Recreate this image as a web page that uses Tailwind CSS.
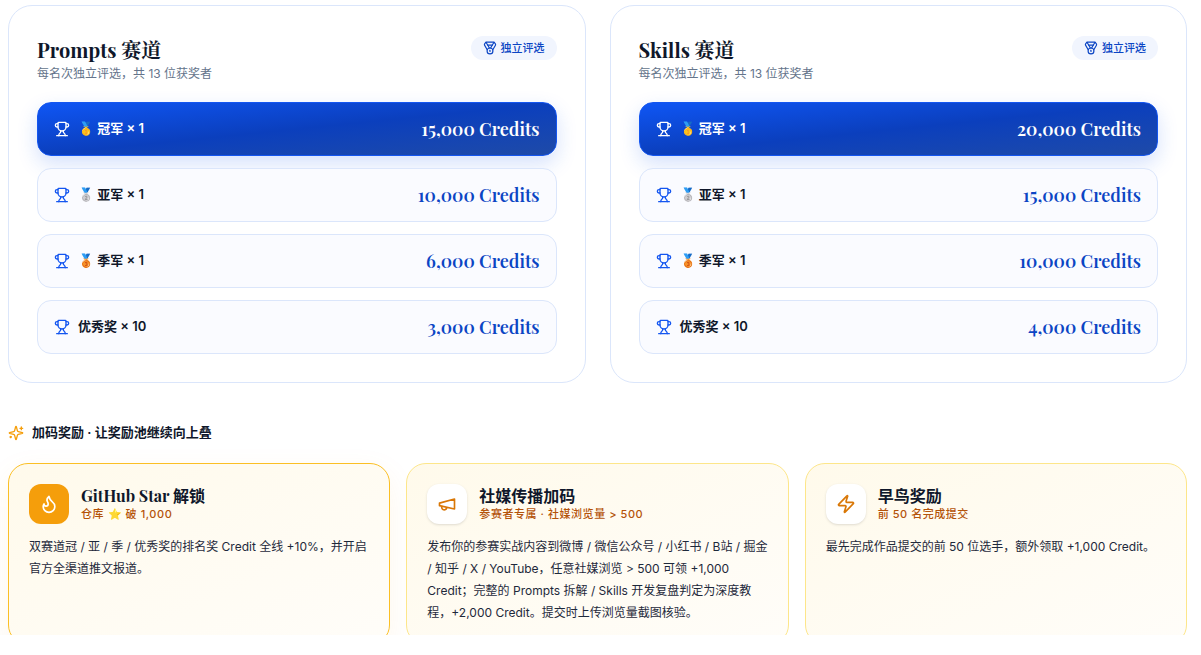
<!DOCTYPE html>
<html lang="zh">
<head>
  <meta charset="UTF-8">
  <title>奖励</title>
  <script src="https://cdn.jsdelivr.net/npm/@tailwindcss/browser@4"></script>
</head>
<body class="bg-white font-['Inter','Noto_Sans_CJK_SC',sans-serif] text-[#0f172a] overflow-hidden">
  <div class="w-[1179px] ml-2 pt-[5px]">
    <!-- Tracks -->
    <div class="grid grid-cols-2 gap-6">
      <!-- Prompts -->
      <section class="rounded-3xl border border-[#dbe6fb] bg-white p-7">
        <div class="flex justify-between items-start">
          <div>
            <h2 class="font-['Playfair_Display','Liberation_Serif','Noto_Serif_CJK_SC','Noto_Sans_CJK_SC',serif] font-bold text-xl leading-7 mt-[2px]">Prompts 赛道</h2>
            <p class="text-xs leading-4 text-[#64748b] mt-[2px]">每名次独立评选，共 13 位获奖者</p>
          </div>
          <span class="flex items-center gap-1 h-6 px-3 rounded-full bg-[#f1f5fe] text-[#0b45c4] text-[11px] font-medium mt-[2px]">
            <svg class="w-[14px] h-[14px]" viewBox="0 0 24 24" fill="none" stroke="currentColor" stroke-width="2" stroke-linecap="round" stroke-linejoin="round"><path d="M7.21 15 2.66 7.14a2 2 0 0 1 .13-2.2L4.4 2.8A2 2 0 0 1 6 2h12a2 2 0 0 1 1.6.8l1.6 2.14a2 2 0 0 1 .14 2.2L16.79 15"/><path d="M11 12 5.12 2.2"/><path d="m13 12 5.88-9.8"/><path d="M8 7h8"/><circle cx="12" cy="17" r="5"/><path d="M12 18v-2h-.5"/></svg>
            独立评选
          </span>
        </div>
        <div class="flex flex-col gap-3 mt-5">
          <div class="h-[54px] flex items-center justify-between px-4 rounded-[14px] border border-[#1456f0] bg-gradient-to-br from-[#0f56f5] via-[#0b3fbd] to-[#1e4aa8] text-white shadow-[0_8px_20px_rgba(20,86,240,0.18)]">
            <div class="flex items-center gap-2 text-[13px] font-semibold">
              <svg class="w-4 h-4" viewBox="0 0 24 24" fill="none" stroke="currentColor" stroke-width="2" stroke-linecap="round" stroke-linejoin="round"><path d="M10 14.66v1.626a2 2 0 0 1-.976 1.696A5 5 0 0 0 7 21.978"/><path d="M14 14.66v1.626a2 2 0 0 0 .976 1.696A5 5 0 0 1 17 21.978"/><path d="M18 9h1.5a1 1 0 0 0 0-5H18"/><path d="M4 22h16"/><path d="M6 9a6 6 0 0 0 12 0V3a1 1 0 0 0-1-1H7a1 1 0 0 0-1 1z"/><path d="M6 9H4.5a1 1 0 0 1 0-5H6"/></svg>
              <span>🥇 冠军 × 1</span>
            </div>
            <span class="font-['Playfair_Display','Liberation_Serif',serif] font-semibold text-lg">15,000 Credits</span>
          </div>
          <div class="h-[54px] flex items-center justify-between px-4 rounded-[14px] border border-[#dbe6fb] bg-[#fafbff]">
            <div class="flex items-center gap-2 text-[13px] font-semibold">
              <svg class="w-4 h-4 text-[#1456f0]" viewBox="0 0 24 24" fill="none" stroke="currentColor" stroke-width="2" stroke-linecap="round" stroke-linejoin="round"><path d="M10 14.66v1.626a2 2 0 0 1-.976 1.696A5 5 0 0 0 7 21.978"/><path d="M14 14.66v1.626a2 2 0 0 0 .976 1.696A5 5 0 0 1 17 21.978"/><path d="M18 9h1.5a1 1 0 0 0 0-5H18"/><path d="M4 22h16"/><path d="M6 9a6 6 0 0 0 12 0V3a1 1 0 0 0-1-1H7a1 1 0 0 0-1 1z"/><path d="M6 9H4.5a1 1 0 0 1 0-5H6"/></svg>
              <span>🥈 亚军 × 1</span>
            </div>
            <span class="font-['Playfair_Display','Liberation_Serif',serif] font-semibold text-lg text-[#0b45c4]">10,000 Credits</span>
          </div>
          <div class="h-[54px] flex items-center justify-between px-4 rounded-[14px] border border-[#dbe6fb] bg-[#fafbff]">
            <div class="flex items-center gap-2 text-[13px] font-semibold">
              <svg class="w-4 h-4 text-[#1456f0]" viewBox="0 0 24 24" fill="none" stroke="currentColor" stroke-width="2" stroke-linecap="round" stroke-linejoin="round"><path d="M10 14.66v1.626a2 2 0 0 1-.976 1.696A5 5 0 0 0 7 21.978"/><path d="M14 14.66v1.626a2 2 0 0 0 .976 1.696A5 5 0 0 1 17 21.978"/><path d="M18 9h1.5a1 1 0 0 0 0-5H18"/><path d="M4 22h16"/><path d="M6 9a6 6 0 0 0 12 0V3a1 1 0 0 0-1-1H7a1 1 0 0 0-1 1z"/><path d="M6 9H4.5a1 1 0 0 1 0-5H6"/></svg>
              <span>🥉 季军 × 1</span>
            </div>
            <span class="font-['Playfair_Display','Liberation_Serif',serif] font-semibold text-lg text-[#0b45c4]">6,000 Credits</span>
          </div>
          <div class="h-[54px] flex items-center justify-between px-4 rounded-[14px] border border-[#dbe6fb] bg-[#fafbff]">
            <div class="flex items-center gap-2 text-[13px] font-semibold">
              <svg class="w-4 h-4 text-[#1456f0]" viewBox="0 0 24 24" fill="none" stroke="currentColor" stroke-width="2" stroke-linecap="round" stroke-linejoin="round"><path d="M10 14.66v1.626a2 2 0 0 1-.976 1.696A5 5 0 0 0 7 21.978"/><path d="M14 14.66v1.626a2 2 0 0 0 .976 1.696A5 5 0 0 1 17 21.978"/><path d="M18 9h1.5a1 1 0 0 0 0-5H18"/><path d="M4 22h16"/><path d="M6 9a6 6 0 0 0 12 0V3a1 1 0 0 0-1-1H7a1 1 0 0 0-1 1z"/><path d="M6 9H4.5a1 1 0 0 1 0-5H6"/></svg>
              <span>优秀奖 × 10</span>
            </div>
            <span class="font-['Playfair_Display','Liberation_Serif',serif] font-semibold text-lg text-[#0b45c4]">3,000 Credits</span>
          </div>
        </div>
      </section>
      <!-- Skills -->
      <section class="rounded-3xl border border-[#dbe6fb] bg-white p-7">
        <div class="flex justify-between items-start">
          <div>
            <h2 class="font-['Playfair_Display','Liberation_Serif','Noto_Serif_CJK_SC','Noto_Sans_CJK_SC',serif] font-bold text-xl leading-7 mt-[2px]">Skills 赛道</h2>
            <p class="text-xs leading-4 text-[#64748b] mt-[2px]">每名次独立评选，共 13 位获奖者</p>
          </div>
          <span class="flex items-center gap-1 h-6 px-3 rounded-full bg-[#f1f5fe] text-[#0b45c4] text-[11px] font-medium mt-[2px]">
            <svg class="w-[14px] h-[14px]" viewBox="0 0 24 24" fill="none" stroke="currentColor" stroke-width="2" stroke-linecap="round" stroke-linejoin="round"><path d="M7.21 15 2.66 7.14a2 2 0 0 1 .13-2.2L4.4 2.8A2 2 0 0 1 6 2h12a2 2 0 0 1 1.6.8l1.6 2.14a2 2 0 0 1 .14 2.2L16.79 15"/><path d="M11 12 5.12 2.2"/><path d="m13 12 5.88-9.8"/><path d="M8 7h8"/><circle cx="12" cy="17" r="5"/><path d="M12 18v-2h-.5"/></svg>
            独立评选
          </span>
        </div>
        <div class="flex flex-col gap-3 mt-5">
          <div class="h-[54px] flex items-center justify-between px-4 rounded-[14px] border border-[#1456f0] bg-gradient-to-br from-[#0f56f5] via-[#0b3fbd] to-[#1e4aa8] text-white shadow-[0_8px_20px_rgba(20,86,240,0.18)]">
            <div class="flex items-center gap-2 text-[13px] font-semibold">
              <svg class="w-4 h-4" viewBox="0 0 24 24" fill="none" stroke="currentColor" stroke-width="2" stroke-linecap="round" stroke-linejoin="round"><path d="M10 14.66v1.626a2 2 0 0 1-.976 1.696A5 5 0 0 0 7 21.978"/><path d="M14 14.66v1.626a2 2 0 0 0 .976 1.696A5 5 0 0 1 17 21.978"/><path d="M18 9h1.5a1 1 0 0 0 0-5H18"/><path d="M4 22h16"/><path d="M6 9a6 6 0 0 0 12 0V3a1 1 0 0 0-1-1H7a1 1 0 0 0-1 1z"/><path d="M6 9H4.5a1 1 0 0 1 0-5H6"/></svg>
              <span>🥇 冠军 × 1</span>
            </div>
            <span class="font-['Playfair_Display','Liberation_Serif',serif] font-semibold text-lg">20,000 Credits</span>
          </div>
          <div class="h-[54px] flex items-center justify-between px-4 rounded-[14px] border border-[#dbe6fb] bg-[#fafbff]">
            <div class="flex items-center gap-2 text-[13px] font-semibold">
              <svg class="w-4 h-4 text-[#1456f0]" viewBox="0 0 24 24" fill="none" stroke="currentColor" stroke-width="2" stroke-linecap="round" stroke-linejoin="round"><path d="M10 14.66v1.626a2 2 0 0 1-.976 1.696A5 5 0 0 0 7 21.978"/><path d="M14 14.66v1.626a2 2 0 0 0 .976 1.696A5 5 0 0 1 17 21.978"/><path d="M18 9h1.5a1 1 0 0 0 0-5H18"/><path d="M4 22h16"/><path d="M6 9a6 6 0 0 0 12 0V3a1 1 0 0 0-1-1H7a1 1 0 0 0-1 1z"/><path d="M6 9H4.5a1 1 0 0 1 0-5H6"/></svg>
              <span>🥈 亚军 × 1</span>
            </div>
            <span class="font-['Playfair_Display','Liberation_Serif',serif] font-semibold text-lg text-[#0b45c4]">15,000 Credits</span>
          </div>
          <div class="h-[54px] flex items-center justify-between px-4 rounded-[14px] border border-[#dbe6fb] bg-[#fafbff]">
            <div class="flex items-center gap-2 text-[13px] font-semibold">
              <svg class="w-4 h-4 text-[#1456f0]" viewBox="0 0 24 24" fill="none" stroke="currentColor" stroke-width="2" stroke-linecap="round" stroke-linejoin="round"><path d="M10 14.66v1.626a2 2 0 0 1-.976 1.696A5 5 0 0 0 7 21.978"/><path d="M14 14.66v1.626a2 2 0 0 0 .976 1.696A5 5 0 0 1 17 21.978"/><path d="M18 9h1.5a1 1 0 0 0 0-5H18"/><path d="M4 22h16"/><path d="M6 9a6 6 0 0 0 12 0V3a1 1 0 0 0-1-1H7a1 1 0 0 0-1 1z"/><path d="M6 9H4.5a1 1 0 0 1 0-5H6"/></svg>
              <span>🥉 季军 × 1</span>
            </div>
            <span class="font-['Playfair_Display','Liberation_Serif',serif] font-semibold text-lg text-[#0b45c4]">10,000 Credits</span>
          </div>
          <div class="h-[54px] flex items-center justify-between px-4 rounded-[14px] border border-[#dbe6fb] bg-[#fafbff]">
            <div class="flex items-center gap-2 text-[13px] font-semibold">
              <svg class="w-4 h-4 text-[#1456f0]" viewBox="0 0 24 24" fill="none" stroke="currentColor" stroke-width="2" stroke-linecap="round" stroke-linejoin="round"><path d="M10 14.66v1.626a2 2 0 0 1-.976 1.696A5 5 0 0 0 7 21.978"/><path d="M14 14.66v1.626a2 2 0 0 0 .976 1.696A5 5 0 0 1 17 21.978"/><path d="M18 9h1.5a1 1 0 0 0 0-5H18"/><path d="M4 22h16"/><path d="M6 9a6 6 0 0 0 12 0V3a1 1 0 0 0-1-1H7a1 1 0 0 0-1 1z"/><path d="M6 9H4.5a1 1 0 0 1 0-5H6"/></svg>
              <span>优秀奖 × 10</span>
            </div>
            <span class="font-['Playfair_Display','Liberation_Serif',serif] font-semibold text-lg text-[#0b45c4]">4,000 Credits</span>
          </div>
        </div>
      </section>
    </div>

    <!-- Bonus -->
    <div class="flex items-center gap-2 mt-10 h-5 text-[13px] font-semibold">
      <svg class="w-4 h-4 text-[#f59e0b]" viewBox="0 0 24 24" fill="none" stroke="currentColor" stroke-width="2" stroke-linecap="round" stroke-linejoin="round"><path d="M9.937 15.5A2 2 0 0 0 8.5 14.063l-6.135-1.582a.5.5 0 0 1 0-.962L8.5 9.936A2 2 0 0 0 9.937 8.5l1.582-6.135a.5.5 0 0 1 .963 0L14.063 8.5A2 2 0 0 0 15.5 9.937l6.135 1.581a.5.5 0 0 1 0 .964L15.5 14.063a2 2 0 0 0-1.437 1.437l-1.582 6.135a.5.5 0 0 1-.963 0z"/><path d="M20 3v4"/><path d="M22 5h-4"/><path d="M4 17v2"/><path d="M5 18H3"/></svg>
      加码奖励 · 让奖励池继续向上叠
    </div>
    <div class="grid grid-cols-3 gap-4 mt-5 h-[172px]">
      <div class="rounded-[20px] border border-[#fbbf24] bg-gradient-to-br from-[#fffaeb] to-[#fffdf9] p-5 shadow-[0_10px_30px_rgba(245,158,11,0.08)]">
        <div class="flex items-center gap-3">
          <div class="w-10 h-10 rounded-xl bg-[#f59e0b] text-white flex items-center justify-center">
            <svg class="w-5 h-5" viewBox="0 0 24 24" fill="none" stroke="currentColor" stroke-width="2" stroke-linecap="round" stroke-linejoin="round"><path d="M8.5 14.5A2.5 2.5 0 0 0 11 12c0-1.38-.5-2-1-3-1.072-2.143-.224-4.054 2-6 .5 2.5 2 4.9 4 6.5 2 1.6 3 3.5 3 5.5a7 7 0 1 1-14 0c0-1.153.433-2.294 1-3a2.5 2.5 0 0 0 2.5 2.5z"/></svg>
          </div>
          <div>
            <h3 class="font-['Playfair_Display','Liberation_Serif','Noto_Sans_CJK_SC',serif] font-bold text-base leading-5">GitHub Star 解锁</h3>
            <p class="text-[11px] leading-4 font-medium tracking-wider text-[#b45309]">仓库 ⭐ 破 1,000</p>
          </div>
        </div>
        <p class="mt-3 text-xs leading-[22px] text-[#1e293b]">双赛道冠 / 亚 / 季 / 优秀奖的排名奖 Credit 全线 +10%，并开启官方全渠道推文报道。</p>
      </div>
      <div class="rounded-[20px] border border-[#fde68a] bg-gradient-to-br from-[#fffaeb] to-[#fffdf9] p-5">
        <div class="flex items-center gap-3">
          <div class="w-10 h-10 rounded-xl bg-white text-[#d97706] flex items-center justify-center shadow-sm">
            <svg class="w-5 h-5" viewBox="0 0 24 24" fill="none" stroke="currentColor" stroke-width="2" stroke-linecap="round" stroke-linejoin="round"><path d="m3 11 18-5v12L3 14v-3z"/><path d="M11.6 16.8a3 3 0 1 1-5.8-1.6"/></svg>
          </div>
          <div>
            <h3 class="font-['Playfair_Display','Liberation_Serif','Noto_Sans_CJK_SC',serif] font-bold text-base leading-5">社媒传播加码</h3>
            <p class="text-[11px] leading-4 font-medium tracking-wider text-[#b45309]">参赛者专属 · 社媒浏览量 &gt; 500</p>
          </div>
        </div>
        <p class="mt-3 text-xs leading-[22px] text-[#1e293b]">发布你的参赛实战内容到微博 / 微信公众号 / 小红书 / B站 / 掘金 / 知乎 / X / YouTube，任意社媒浏览 &gt; 500 可领 +1,000 Credit；完整的 Prompts 拆解 / Skills 开发复盘判定为深度教程，+2,000 Credit。提交时上传浏览量截图核验。</p>
      </div>
      <div class="rounded-[20px] border border-[#fde68a] bg-gradient-to-br from-[#fffaeb] to-[#fffdf9] p-5">
        <div class="flex items-center gap-3">
          <div class="w-10 h-10 rounded-xl bg-white text-[#d97706] flex items-center justify-center shadow-sm">
            <svg class="w-5 h-5" viewBox="0 0 24 24" fill="none" stroke="currentColor" stroke-width="2" stroke-linecap="round" stroke-linejoin="round"><path d="M4 14a1 1 0 0 1-.78-1.63l9.9-10.2a.5.5 0 0 1 .86.46l-1.92 6.02A1 1 0 0 0 13 10h7a1 1 0 0 1 .78 1.63l-9.9 10.2a.5.5 0 0 1-.86-.46l1.92-6.02A1 1 0 0 0 11 14z"/></svg>
          </div>
          <div>
            <h3 class="font-['Playfair_Display','Liberation_Serif','Noto_Sans_CJK_SC',serif] font-bold text-base leading-5">早鸟奖励</h3>
            <p class="text-[11px] leading-4 font-medium tracking-wider text-[#b45309]">前 50 名完成提交</p>
          </div>
        </div>
        <p class="mt-3 text-xs leading-[22px] text-[#1e293b]">最先完成作品提交的前 50 位选手，额外领取 +1,000 Credit。</p>
      </div>
    </div>
  </div>
</body>
</html>
